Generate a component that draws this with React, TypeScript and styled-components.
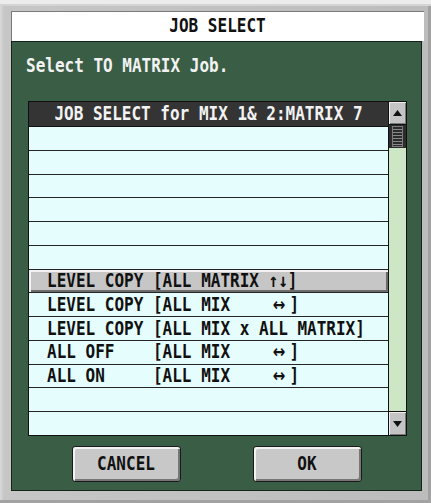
import styled, { createGlobalStyle } from 'styled-components';

const GlobalStyle = createGlobalStyle`
  html, body {
    margin: 0;
    padding: 0;
    background: #ececec;
  }
`;

const Window = styled.div`
  box-sizing: border-box;
  width: 431px;
  height: 499px;
  margin-top: 4px;
  padding: 7px 7px 12px 11px;
  display: flex;
  flex-direction: column;
  background: linear-gradient(to right, #dadada 0, #c6c6c6 4px, #bcbcbc 100%);
  box-shadow: inset 0 2px 0 #d4d4d4, inset -3px -3px 0 #a2a2a2;
  font-family: "DejaVu Sans Mono", "Liberation Mono", monospace;
  font-weight: bold;
  font-size: 16px;
`;

const Caps = styled.span`
  display: inline-block;
  white-space: pre;
  line-height: 16px;
  transform: scaleY(1.2);
`;

/* the left-right arrow sits in a two-cell slot, drawn a little heavier than the mono face */
const Wide = styled.span`
  display: inline-block;
  width: 2ch;
  text-align: center;
  font-family: "DejaVu Sans", sans-serif;
  font-size: 15px;
`;

const TitleBar = styled.div`
  height: 30px;
  flex: none;
  display: flex;
  align-items: center;
  justify-content: center;
  background: #ffffff;
  color: #111;
  box-shadow: inset 1px 1px 0 #7a7a7a;
`;

const Panel = styled.div`
  flex: 1;
  display: flex;
  flex-direction: column;
  margin-right: 2px;
  background: #3a5d45;
  border: 1px solid #14241a;
`;

const Prompt = styled.div`
  box-sizing: border-box;
  height: 59px;
  padding: 14px 0 0 14px;
  color: #f2f2f2;
`;

const ListBox = styled.div`
  box-sizing: border-box;
  width: 379px;
  height: 335px;
  margin-left: 16px;
  display: flex;
  border: 1px solid #101010;
  background: #1c1c1c;
`;

const ListMain = styled.div`
  width: 360px;
  display: flex;
  flex-direction: column;
  border-right: 1px solid #111;
`;

const ListHeader = styled.div`
  height: 24px;
  display: flex;
  align-items: center;
  justify-content: center;
  background: #343434;
  color: #f2f2f2;
  border-bottom: 1px solid #111;
`;

const Rows = styled.div`
  flex: 1;
  display: grid;
  grid-template-rows: repeat(13, 1fr);
  gap: 1px;
  background: #242424;
`;

const Row = styled.div<{ $selected?: boolean }>`
  display: flex;
  align-items: center;
  padding-left: 18px;
  color: #111;
  background: ${(p) => (p.$selected ? '#c6c6c6' : '#e6fdfd')};
  box-shadow: ${(p) =>
    p.$selected ? 'inset 2px 2px 0 #f2f2f2, inset -2px -2px 0 #6c6c6c' : 'none'};
`;

const ScrollBar = styled.div`
  width: 17px;
  display: flex;
  flex-direction: column;
`;

const ScrollButton = styled.div<{ $down?: boolean }>`
  display: flex;
  align-items: center;
  justify-content: center;
  background: #c4c4c4;
  box-shadow: inset 1px 1px 0 #eeeeee, inset -1px -1px 0 #7a7a7a;
  border-top: ${(p) => (p.$down ? '1px solid #111' : 'none')};
  border-bottom: ${(p) => (p.$down ? 'none' : '1px solid #111')};
  height: ${(p) => (p.$down ? '23px' : '22px')};
`;

const Thumb = styled.div`
  height: 23px;
  display: flex;
  align-items: center;
  justify-content: center;
  background: #2c2c2c;
`;

const Track = styled.div`
  flex: 1;
  background: #cde7c6;
`;

const ButtonRow = styled.div`
  display: flex;
  justify-content: center;
  gap: 72px;
  padding-top: 10px;
`;

const Button = styled.button`
  box-sizing: border-box;
  width: 109px;
  height: 36px;
  padding: 0;
  display: flex;
  align-items: center;
  justify-content: center;
  font: inherit;
  color: #111;
  background: #c8c8c8;
  border: 1px solid #1a1a1a;
  border-radius: 3px;
  box-shadow: inset 2px 2px 0 #f2f2f2, inset -2px -2px 0 #767676;
`;

function Triangle({ down }: { down?: boolean }) {
  return (
    <svg width="9" height="6" viewBox="0 0 9 6">
      <polygon points={down ? '0,0 9,0 4.5,6' : '0,6 9,6 4.5,0'} fill="#111" />
    </svg>
  );
}

function Grip() {
  return (
    <svg width="11" height="21" viewBox="0 0 11 21">
      <rect x="0.5" y="0.5" width="10" height="20" fill="none" stroke="#7c7c7c" />
      {[3, 6, 9, 12, 15, 18].map((y) => (
        <line key={y} x1="1" x2="10" y1={y + 0.5} y2={y + 0.5} stroke="#8a8a8a" />
      ))}
    </svg>
  );
}

const mixArrow = (
  <>
    <Wide>↔</Wide>]
  </>
);

type Item = { label?: React.ReactNode; selected?: boolean };

const items: Item[] = [
  {},
  {},
  {},
  {},
  {},
  {},
  { label: 'LEVEL COPY [ALL MATRIX ↑↓]', selected: true },
  { label: <>LEVEL COPY [ALL MIX    {mixArrow}</> },
  { label: 'LEVEL COPY [ALL MIX x ALL MATRIX]' },
  { label: <>ALL OFF    [ALL MIX    {mixArrow}</> },
  { label: <>ALL ON     [ALL MIX    {mixArrow}</> },
  {},
  {},
];

export default function App() {
  return (
    <>
      <GlobalStyle />
      <Window>
        <TitleBar>
          <Caps>JOB SELECT</Caps>
        </TitleBar>
        <Panel>
          <Prompt>
            <Caps>Select TO MATRIX Job.</Caps>
          </Prompt>
          <ListBox>
            <ListMain>
              <ListHeader>
                <Caps>JOB SELECT for MIX 1&amp; 2:MATRIX 7</Caps>
              </ListHeader>
              <Rows>
                {items.map((item, i) => (
                  <Row key={i} $selected={item.selected}>
                    {item.label && <Caps>{item.label}</Caps>}
                  </Row>
                ))}
              </Rows>
            </ListMain>
            <ScrollBar>
              <ScrollButton>
                <Triangle />
              </ScrollButton>
              <Thumb>
                <Grip />
              </Thumb>
              <Track />
              <ScrollButton $down>
                <Triangle down />
              </ScrollButton>
            </ScrollBar>
          </ListBox>
          <ButtonRow>
            <Button>
              <Caps>CANCEL</Caps>
            </Button>
            <Button>
              <Caps>OK</Caps>
            </Button>
          </ButtonRow>
        </Panel>
      </Window>
    </>
  );
}
